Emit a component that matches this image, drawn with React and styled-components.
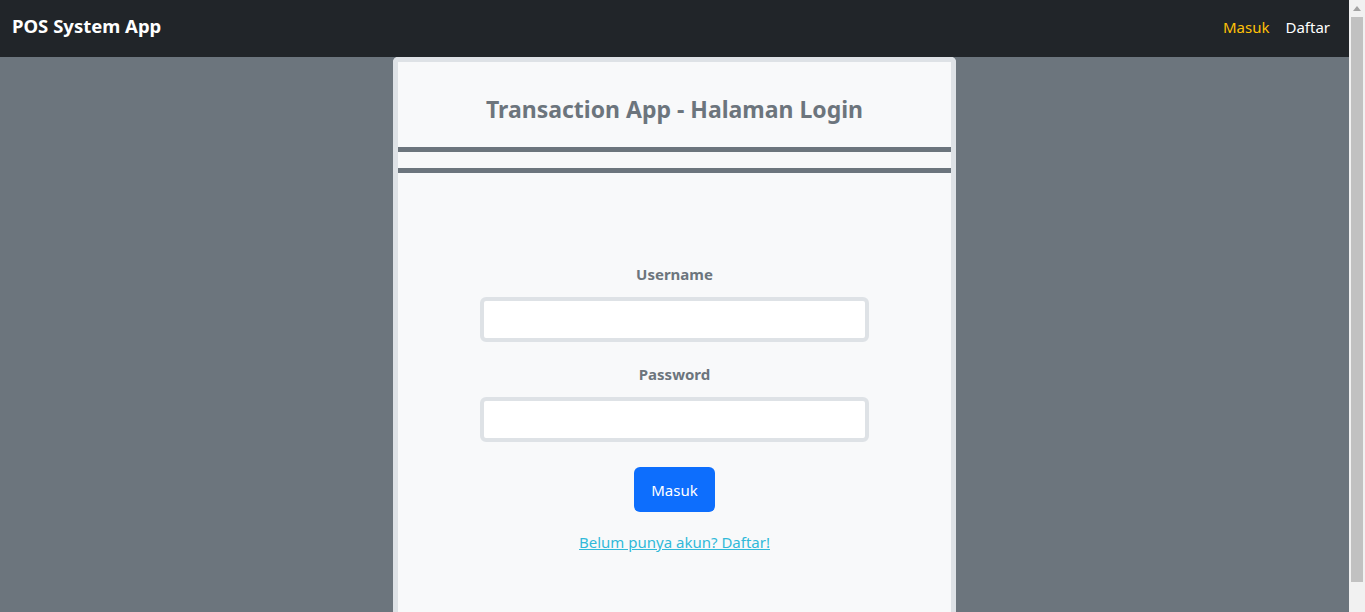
import styled, { createGlobalStyle } from 'styled-components';

const GlobalStyle = createGlobalStyle`
  html, body {
    margin: 0;
    padding: 0;
  }
  body {
    background: #6c757d;
    font-family: "Noto Sans", "Open Sans", sans-serif;
    min-height: 700px;
  }
  #root {
    width: calc(100% - 16px);
  }
`;

const Navbar = styled.nav`
  height: 57px;
  background: #212529;
  display: flex;
  align-items: center;
  justify-content: space-between;
  padding: 0 19px 0 12px;
  box-sizing: border-box;
`;

const Brand = styled.div`
  color: #fff;
  font-size: 18.5px;
  font-weight: 700;
  margin-top: -7px;
`;

const NavLinks = styled.div`
  display: flex;
  gap: 16px;
  margin-top: -3px;
`;

const NavLink = styled.a`
  color: ${(p) => (p.active ? '#ffc107' : '#ffffff')};
  font-size: 15px;
  text-decoration: none;
`;

const Card = styled.div`
  width: 563px;
  margin: 0 auto;
  box-sizing: border-box;
  background: #f8f9fa;
  border: 5px solid #dee2e6;
  border-bottom: none;
  border-radius: 5px 5px 0 0;
  padding-bottom: 120px;
`;

const Title = styled.h3`
  margin: 0;
  padding: 33px 0 23px;
  text-align: center;
  color: #6c757d;
  font-size: 23px;
  font-weight: 700;
  line-height: 29px;
`;

const Rule = styled.div`
  height: 5px;
  background: #6c757d;
  margin-bottom: ${(p) => p.gap || 0}px;
`;

const Form = styled.form`
  display: flex;
  flex-direction: column;
  align-items: center;
  padding-top: 89px;
`;

const Label = styled.label`
  color: #6c757d;
  font-size: 15px;
  font-weight: 700;
  line-height: 24px;
  margin-bottom: 11px;
`;

const Input = styled.input`
  width: 389px;
  height: 45px;
  box-sizing: border-box;
  border: 4px solid #dee2e6;
  border-radius: 6px;
  background: #fff;
  outline: none;
  margin-bottom: ${(p) => p.gap}px;
`;

const Button = styled.button`
  width: 81px;
  height: 45px;
  border: none;
  border-radius: 6px;
  background: #0d6efd;
  color: #fff;
  font-family: inherit;
  font-size: 15px;
  margin-bottom: 18px;
`;

const SignupLink = styled.a`
  color: #31b9d9;
  font-size: 15px;
  line-height: 24px;
  text-decoration: underline;
`;

/* browser scrollbar drawn over the right edge */
const Scrollbar = styled.div`
  position: fixed;
  top: 0;
  right: 0;
  width: 16px;
  height: 100vh;
  background: #f1f1f1;
  display: flex;
  flex-direction: column;
  align-items: center;
`;

const ScrollArrow = styled.div`
  height: 16px;
  display: flex;
  align-items: center;
  justify-content: center;
`;

const ScrollThumb = styled.div`
  width: 12px;
  height: 565px;
  margin-top: 1px;
  background: #c1c1c1;
`;

export default function App() {
  return (
    <>
      <GlobalStyle />
      <Navbar>
        <Brand>POS System App</Brand>
        <NavLinks>
          <NavLink active>Masuk</NavLink>
          <NavLink>Daftar</NavLink>
        </NavLinks>
      </Navbar>
      <Card>
        <Title>Transaction App - Halaman Login</Title>
        <Rule gap={16} />
        <Rule />
        <Form onSubmit={(e) => e.preventDefault()}>
          <Label>Username</Label>
          <Input type="text" gap={20} />
          <Label>Password</Label>
          <Input type="password" gap={25} />
          <Button type="submit">Masuk</Button>
          <SignupLink href="#">Belum punya akun? Daftar!</SignupLink>
        </Form>
      </Card>
      <Scrollbar>
        <ScrollArrow>
          <svg width="8" height="5" viewBox="0 0 8 5">
            <path d="M4 0 L8 5 L0 5 Z" fill="#a3a3a3" />
          </svg>
        </ScrollArrow>
        <ScrollThumb />
      </Scrollbar>
    </>
  );
}
